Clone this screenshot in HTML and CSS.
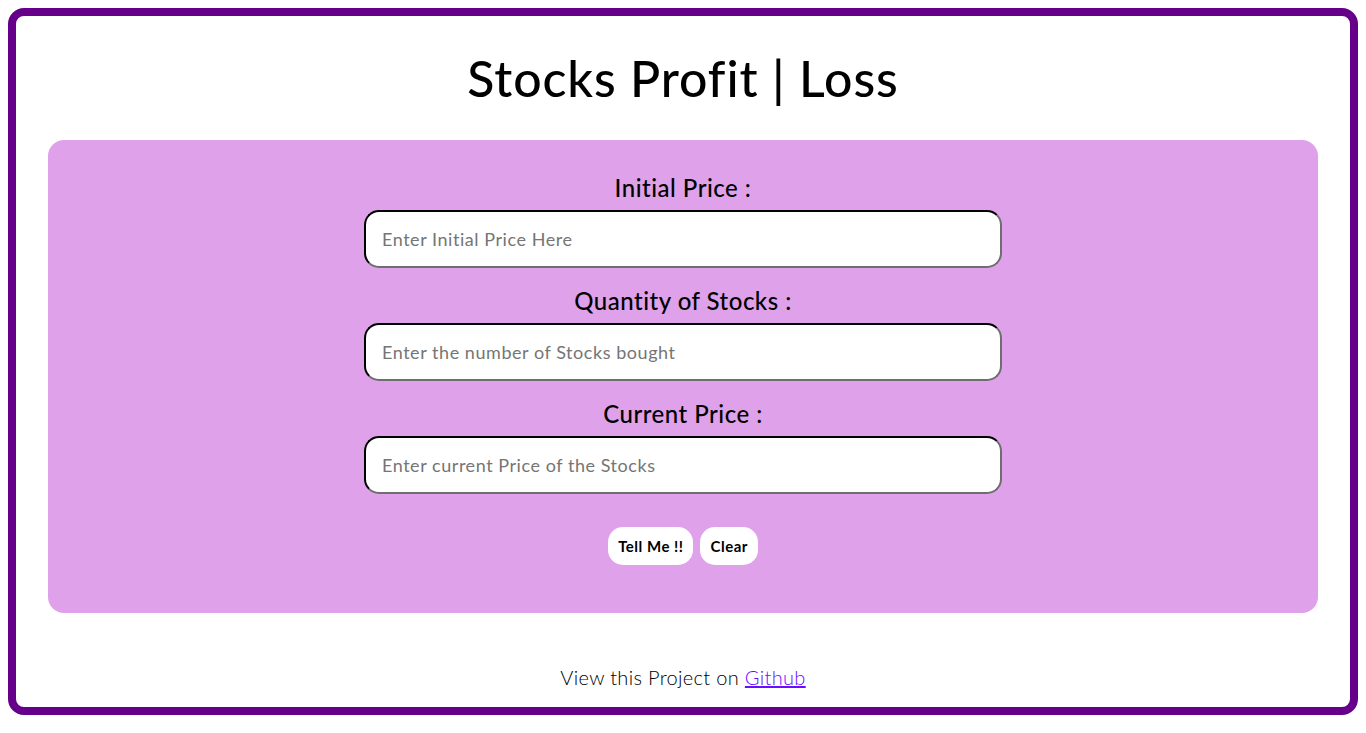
FILE: index.html
```html
<!DOCTYPE html>
<html lang="en">
<head>
<meta charset="utf-8">
<title>Stocks Profit | Loss</title>
<link rel="stylesheet" href="styles.css">
</head>
<body>
<div class="frame">
  <h1 class="title">Stocks Profit | Loss</h1>
  <section class="card">
    <label class="label" for="initial">Initial Price :</label>
    <input class="field" id="initial" type="number" placeholder="Enter Initial Price Here">
    <label class="label" for="qty">Quantity of Stocks :</label>
    <input class="field" id="qty" type="number" placeholder="Enter the number of Stocks bought">
    <label class="label" for="current">Current Price :</label>
    <input class="field" id="current" type="number" placeholder="Enter current Price of the Stocks">
    <div class="actions">
      <button class="btn" type="button">Tell Me !!</button>
      <button class="btn" type="button">Clear</button>
    </div>
  </section>
  <footer class="footer">View this Project on <a class="link" href="#">Github</a></footer>
</div>
</body>
</html>
```
FILE: styles.css
```css
html, body { margin: 0; padding: 0; }
body {
  margin: 8px;
  font-family: Lato, "Noto Sans", sans-serif;
  color: #000;
  background: #fff;
}
.frame {
  box-sizing: border-box;
  height: 707px;
  border: 8px solid #66008a;
  border-radius: 16px;
  padding: 34px 32px 0;
  display: flex;
  flex-direction: column;
  align-items: stretch;
}
.title {
  margin: 0;
  text-align: center;
  font-size: 50px;
  line-height: 56px;
  font-weight: 500;
  letter-spacing: 0.9px;
}
.card {
  margin-top: 34px;
  background: #dea1ea;
  border-radius: 16px;
  padding: 34px 0 48px;
  display: flex;
  flex-direction: column;
  align-items: center;
}
.label {
  font-size: 24px;
  line-height: 28px;
  font-weight: 500;
  letter-spacing: 0.5px;
  margin-bottom: 8px;
}
.field {
  box-sizing: border-box;
  width: 638px;
  height: 58px;
  border: 2px inset #767676;
  border-top-color: #1a1a1a;
  border-left-color: #1a1a1a;
  border-right-color: #6e6e6e;
  border-bottom-color: #6e6e6e;
  border-radius: 15px;
  padding: 0 16px;
  font-family: inherit;
  font-size: 18px;
  letter-spacing: 0.55px;
  background: #fff;
  margin-bottom: 19px;
  outline: none;
}
.field::placeholder { color: #757575; }
.field::-webkit-outer-spin-button,
.field::-webkit-inner-spin-button { -webkit-appearance: none; margin: 0; }
.actions {
  margin-top: 14px;
  display: flex;
  gap: 7px;
}
.btn {
  height: 38px;
  border: none;
  border-radius: 15px;
  background: #fff;
  padding: 0 10px;
  font-family: inherit;
  font-size: 15px;
  font-weight: 700;
  letter-spacing: 0.5px;
  color: #000;
}
.footer {
  margin-top: 52px;
  text-align: center;
  font-size: 20px;
  line-height: 24px;
  font-weight: 300;
  letter-spacing: 0.33px;
}
.link { color: #6a0dff; text-decoration: underline; }
```
